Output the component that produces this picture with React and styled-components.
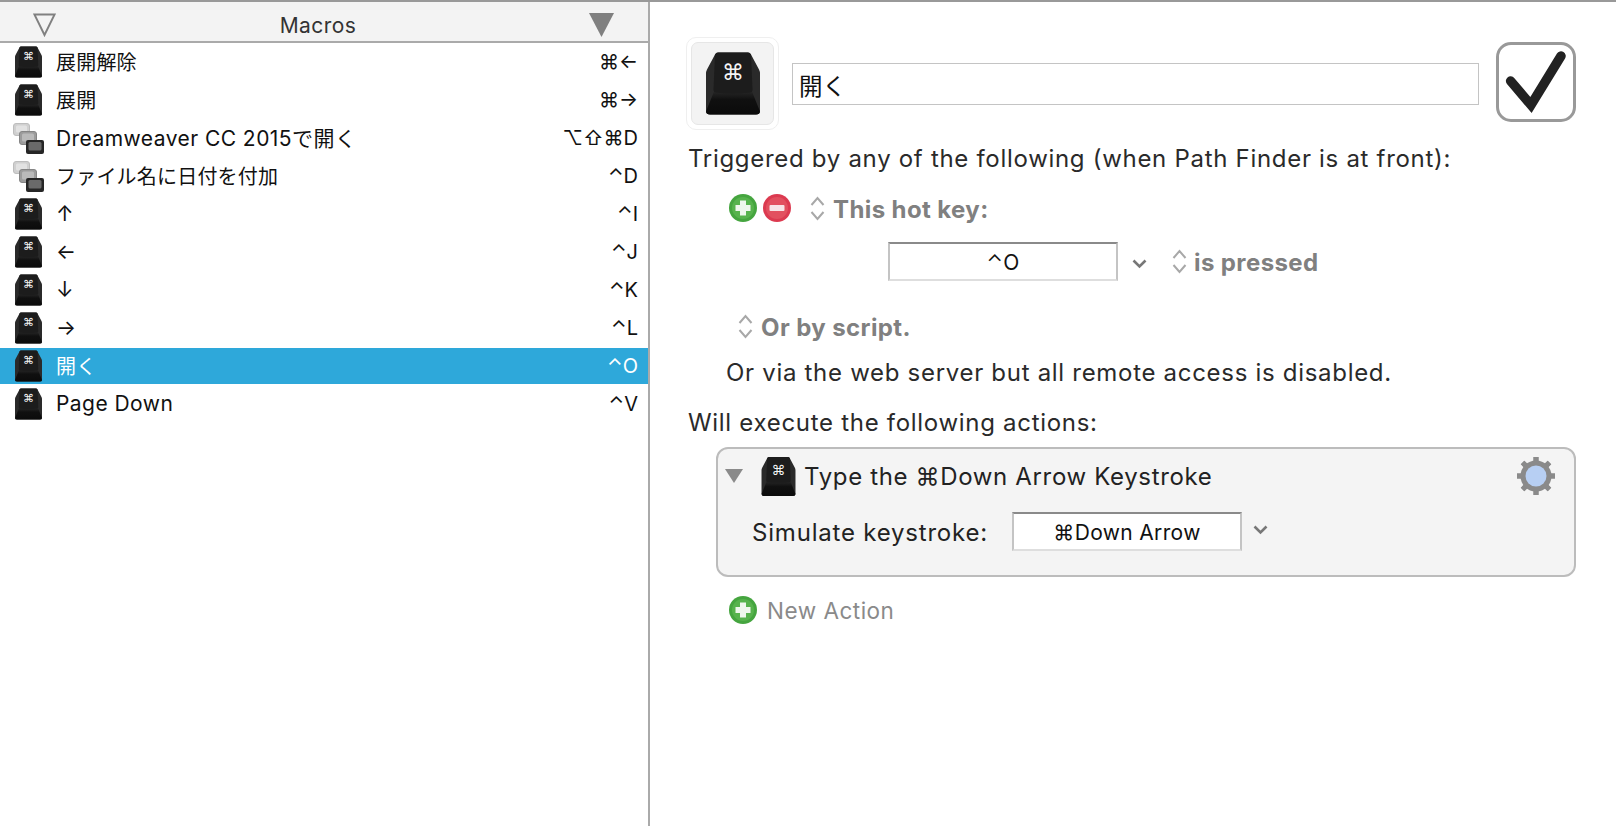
import React from "react";
import styled, { createGlobalStyle } from "styled-components";

const FONT = `Inter, "Noto Sans CJK JP", "DejaVu Sans", sans-serif`;

const Global = createGlobalStyle`
  html, body { margin: 0; padding: 0; background: #fff; height: 100%; overflow: hidden; }
  body { font-family: ${FONT}; color: #222; }
  #root { height: 100%; }
`;

const Window = styled.div`
  width: 1616px;
  height: 826px;
  display: flex;
  flex-direction: column;
  border-top: 2px solid #999;
  box-sizing: border-box;
`;
const Columns = styled.div`
  flex: 1;
  display: flex;
  min-height: 0;
`;
const Sidebar = styled.aside`
  width: 650px;
  box-sizing: border-box;
  flex: none;
  border-right: 2px solid #aaa;
  display: flex;
  flex-direction: column;
`;
const ListHeader = styled.header`
  height: 41px;
  flex: none;
  box-sizing: border-box;
  background: #f3f3f3;
  border-bottom: 2px solid #aaa;
  display: flex;
  align-items: center;
  justify-content: space-between;
  padding: 7px 34px 0 33px;
`;
const HeaderTitle = styled.span`
  font-size: 21px;
  letter-spacing: 0.45px;
  color: #333;
  margin-right: 9px;
`;
const MacroList = styled.ul`
  list-style: none;
  margin: 0;
  padding: 1px 0 0;
  display: flex;
  flex-direction: column;
  gap: 2px;
`;
const MacroRow = styled.li`
  height: 36px;
  display: flex;
  align-items: center;
  padding: 0 10px 0 13px;
  background: ${(p) => (p.$selected ? "#2ea8da" : "transparent")};
  color: ${(p) => (p.$selected ? "#fff" : "#111")};
`;
const IconSlot = styled.span`
  width: 31px;
  height: 32px;
  flex: none;
  display: flex;
  align-items: center;
  justify-content: center;
  margin-right: 12px;
`;
const MacroName = styled.span`
  flex: 1;
  font-size: ${(p) => (p.$cjk ? 20 : 21)}px;
  letter-spacing: ${(p) => (p.$cjk ? 0.2 : 0.45)}px;
  padding-bottom: 2px;
  white-space: nowrap;
`;
const Shortcut = styled.span`
  font-size: 20px;
  padding-bottom: 1px;
  white-space: nowrap;
`;

const Detail = styled.main`
  flex: 1;
  display: flex;
  flex-direction: column;
`;
const TitleRow = styled.div`
  margin-top: 35px;
  padding-left: 36px;
  height: 93px;
  display: flex;
  align-items: center;
`;
const IconWell = styled.div`
  width: 93px;
  height: 93px;
  box-sizing: border-box;
  flex: none;
  border: 1px solid #efefef;
  border-radius: 10px;
  padding: 4px;
  display: flex;
`;
const IconWellInner = styled.div`
  flex: 1;
  background: #f3f3f3;
  border: 1px solid #e6e6e6;
  border-radius: 7px;
  display: flex;
  align-items: center;
  justify-content: center;
`;
const NameInput = styled.div`
  width: 687px;
  height: 42px;
  box-sizing: border-box;
  margin-left: 13px;
  border: 1px solid #c4c4c4;
  padding: 3px 6px 0;
  display: flex;
  align-items: center;
  font-size: 23.5px;
  color: #111;
`;
const CheckBox = styled.div`
  width: 80px;
  height: 80px;
  box-sizing: border-box;
  flex: none;
  margin: -4px 0 0 17px;
  border: 3px solid #999;
  border-radius: 15px;
  display: flex;
  align-items: center;
  justify-content: center;
`;
const Line = styled.div`
  height: 30px;
  line-height: 30px;
  margin-top: ${(p) => p.$top}px;
  padding-left: ${(p) => p.$left}px;
  font-size: 24px;
  letter-spacing: 0.7px;
  white-space: nowrap;
  color: #2a2a2a;
`;
const ControlRow = styled.div`
  display: flex;
  align-items: center;
  height: ${(p) => p.$h}px;
  margin-top: ${(p) => p.$top}px;
  padding-left: ${(p) => p.$left}px;
`;
const Round = styled.span`
  width: 28px;
  height: 28px;
  flex: none;
  margin-right: ${(p) => p.$gap || 0}px;
  display: flex;
`;
const Stepper = styled.span`
  flex: none;
  display: flex;
  margin-right: ${(p) => p.$gap}px;
  margin-left: ${(p) => p.$left || 0}px;
`;
const BoldLabel = styled.span`
  font-size: 24px;
  font-weight: 700;
  letter-spacing: 0.4px;
  margin-top: 2px;
  color: #808080;
  white-space: nowrap;
`;
const KeyField = styled.div`
  width: 230px;
  height: 39px;
  box-sizing: border-box;
  flex: none;
  background: #fff;
  border: 2px solid #c4c4c4;
  border-top-color: #8a8a8a;
  border-bottom-color: #dedede;
  padding-top: 1px;
  display: flex;
  align-items: center;
  justify-content: center;
  font-size: 21px;
  letter-spacing: 0.35px;
  color: #111;
`;
const DropChevron = styled.span`
  flex: none;
  display: flex;
  margin: ${(p) => p.$margin};
`;
const ActionBox = styled.section`
  width: 860px;
  height: 130px;
  box-sizing: border-box;
  margin: 9px 0 0 66px;
  background: #f4f4f4;
  border: 2px solid #bcbcbc;
  border-radius: 12px;
  padding: 7px 19px 0 7px;
`;
const ActionHead = styled.div`
  display: flex;
  align-items: center;
  height: 40px;
`;
const Disclosure = styled.span`
  flex: none;
  display: flex;
  margin-right: 18px;
`;
const ActionTitle = styled.span`
  flex: 1;
  font-size: 24px;
  letter-spacing: 0.65px;
  margin-left: 8px;
  white-space: nowrap;
  color: #222;
`;
const ActionBody = styled.div`
  display: flex;
  align-items: center;
  height: 39px;
  margin-top: 16px;
  padding-left: 27px;
`;
const SimLabel = styled.span`
  width: 260px;
  flex: none;
  font-size: 24px;
  letter-spacing: 0.8px;
  margin-top: 2px;
  white-space: nowrap;
  color: #222;
`;
const GrayLabel = styled.span`
  font-size: 22.5px;
  letter-spacing: 0.5px;
  color: #8a8a8a;
  white-space: nowrap;
`;

let uid = 0;
function KeyCap({ w, h }) {
  const id = React.useMemo(() => `k${uid++}`, []);
  return (
    <svg width={w} height={h} viewBox="0 0 54 62" style={{ flex: "none" }}>
      <defs>
        <linearGradient id={id} x1="0" y1="0" x2="0" y2="1">
          <stop offset="0" stopColor="#262626" />
          <stop offset="0.35" stopColor="#101010" />
          <stop offset="1" stopColor="#0b0b0b" />
        </linearGradient>
      </defs>
      <path d="M9 2 Q10 0 12 0 H42 Q44 0 45 2 L53 17 Q54 19 54 21 V58 Q54 62 50 62 H4 Q0 62 0 58 V21 Q0 19 1 17 Z" fill="#2a2a2a" />
      <path d="M0 59 L8 39 H46 L54 59 Q54 62 50 62 H4 Q0 62 0 59 Z" fill={`url(#${id})`} />
      <path d="M7.5 37 L9 2 Q10 0 12 0 H42 Q44 0 45 2 L46.5 37 Q46.5 40 44 40 Q27 42 10 40 Q7.5 40 7.5 37 Z" fill="#1c1c1c" />
      <text x="27" y="20" fontSize="22" fill="#f5f5f5" textAnchor="middle" dominantBaseline="central" fontFamily='"DejaVu Sans", sans-serif'>⌘</text>
    </svg>
  );
}

function StackIcon() {
  return (
    <svg width="31" height="31" viewBox="0 0 31 31" style={{ flex: "none" }}>
      <rect x="0.5" y="0.5" width="16" height="12" rx="2.5" fill="#d0d0d0" stroke="#bdbdbd" />
      <rect x="3" y="2.5" width="11" height="7" rx="1.5" fill="#e2e2e2" />
      <rect x="6.5" y="8.5" width="17" height="13" rx="2.5" fill="#9c9c9c" stroke="#858585" />
      <rect x="9" y="10.5" width="12" height="8" rx="1.5" fill="#bababa" />
      <rect x="13" y="17" width="18" height="14" rx="2" fill="#262626" />
      <rect x="15.5" y="19" width="13" height="8.5" rx="1.5" fill="#6a6a6a" />
    </svg>
  );
}

function Tri({ hollow, w, h, color = "#808080" }) {
  return (
    <svg width={w} height={h} viewBox="0 0 24 24" preserveAspectRatio="none" style={{ flex: "none" }}>
      {hollow ? (
        <path d="M1.5 1.5 H22.5 L12 22 Z" fill="none" stroke={color} strokeWidth="2" />
      ) : (
        <path d="M0 0 H24 L12 24 Z" fill={color} />
      )}
    </svg>
  );
}

function PlusCircle() {
  return (
    <svg width="28" height="28" viewBox="0 0 28 28">
      <circle cx="14" cy="14" r="14" fill="#45a53f" />
      <circle cx="14" cy="14" r="11" fill="#57b34d" />
      <path d="M11 6.5 H17 V11 H21.5 V17 H17 V21.5 H11 V17 H6.5 V11 H11 Z" fill="#eef7ec" />
    </svg>
  );
}
function MinusCircle() {
  return (
    <svg width="28" height="28" viewBox="0 0 28 28">
      <circle cx="14" cy="14" r="14" fill="#dc3a50" />
      <circle cx="14" cy="14" r="11" fill="#e2505f" />
      <rect x="6.5" y="11" width="15" height="6" rx="1" fill="#f7e4e6" />
    </svg>
  );
}
function Updown() {
  return (
    <svg width="15" height="25" viewBox="0 0 15 25">
      <path d="M1.5 9 L7.5 2 L13.5 9 M1.5 16 L7.5 23 L13.5 16" fill="none" stroke="#a8a8a8" strokeWidth="2" />
    </svg>
  );
}
function Chevron() {
  return (
    <svg width="15" height="10" viewBox="0 0 15 10">
      <path d="M1.5 1.5 L7.5 7.5 L13.5 1.5" fill="none" stroke="#777" strokeWidth="2.6" />
    </svg>
  );
}
function Gear() {
  const teeth = [0, 45, 90, 135, 180, 225, 270, 315];
  return (
    <svg width="38" height="38" viewBox="0 0 38 38" style={{ flex: "none" }}>
      {teeth.map((a) => (
        <rect key={a} x="16.5" y="0" width="5" height="38" fill="#8a8a8a" transform={`rotate(${a} 19 19)`} />
      ))}
      <circle cx="19" cy="19" r="15.5" fill="#8a8a8a" />
      <circle cx="19" cy="19" r="10.5" fill="#b7cff3" />
    </svg>
  );
}

const macros = [
  { icon: "key", name: "展開解除", keys: "⌘←", cjk: true },
  { icon: "key", name: "展開", keys: "⌘→", cjk: true },
  { icon: "stack", name: "Dreamweaver CC 2015で開く", keys: "⌥⇧⌘D" },
  { icon: "stack", name: "ファイル名に日付を付加", keys: "⌃D", cjk: true },
  { icon: "key", name: "↑", keys: "⌃I" },
  { icon: "key", name: "←", keys: "⌃J" },
  { icon: "key", name: "↓", keys: "⌃K" },
  { icon: "key", name: "→", keys: "⌃L" },
  { icon: "key", name: "開く", keys: "⌃O", cjk: true, selected: true },
  { icon: "key", name: "Page Down", keys: "⌃V" },
];

export default function App() {
  return (
    <>
      <Global />
      <Window>
        <Columns>
          <Sidebar>
            <ListHeader>
              <Tri hollow w={23} h={24} />
              <HeaderTitle>Macros</HeaderTitle>
              <Tri w={25} h={24} />
            </ListHeader>
            <MacroList>
              {macros.map((m) => (
                <MacroRow key={m.name} $selected={m.selected}>
                  <IconSlot>
                    {m.icon === "key" ? <KeyCap w={27} h={32} /> : <StackIcon />}
                  </IconSlot>
                  <MacroName $cjk={m.cjk}>{m.name}</MacroName>
                  <Shortcut>{m.keys}</Shortcut>
                </MacroRow>
              ))}
            </MacroList>
          </Sidebar>
          <Detail>
            <TitleRow>
              <IconWell>
                <IconWellInner>
                  <KeyCap w={54} h={63} />
                </IconWellInner>
              </IconWell>
              <NameInput>開く</NameInput>
              <CheckBox>
                <svg width="62" height="62" viewBox="0 0 62 62" style={{ overflow: "visible" }}>
                  <path d="M5.6 30 L26 54 L56 5" fill="none" stroke="#222" strokeWidth="9.5" strokeLinecap="round" strokeLinejoin="miter" />
                </svg>
              </CheckBox>
            </TitleRow>
            <Line $top={14} $left={38}>Triggered by any of the following (when Path Finder is at front):</Line>
            <ControlRow $h={28} $top={20} $left={79}>
              <Round $gap={6}><PlusCircle /></Round>
              <Round><MinusCircle /></Round>
              <Stepper $left={19} $gap={8}><Updown /></Stepper>
              <BoldLabel>This hot key:</BoldLabel>
            </ControlRow>
            <ControlRow $h={39} $top={20} $left={238}>
              <KeyField>⌃O</KeyField>
              <DropChevron $margin="4px 25px 0 14px"><Chevron /></DropChevron>
              <Stepper $gap={7}><Updown /></Stepper>
              <BoldLabel>is pressed</BoldLabel>
            </ControlRow>
            <ControlRow $h={28} $top={31} $left={88}>
              <Stepper $gap={8}><Updown /></Stepper>
              <BoldLabel>Or by script.</BoldLabel>
            </ControlRow>
            <Line $top={18} $left={76}>Or via the web server but all remote access is disabled.</Line>
            <Line $top={20} $left={38}>Will execute the following actions:</Line>
            <ActionBox>
              <ActionHead>
                <Disclosure><Tri w={18} h={14} color="#8a8a8a" /></Disclosure>
                <KeyCap w={35} h={39} />
                <ActionTitle>Type the ⌘Down Arrow Keystroke</ActionTitle>
                <Gear />
              </ActionHead>
              <ActionBody>
                <SimLabel>Simulate keystroke:</SimLabel>
                <KeyField>⌘Down Arrow</KeyField>
                <DropChevron $margin="-4px 0 0 11px"><Chevron /></DropChevron>
              </ActionBody>
            </ActionBox>
            <ControlRow $h={28} $top={19} $left={79}>
              <Round $gap={10}><PlusCircle /></Round>
              <GrayLabel>New Action</GrayLabel>
            </ControlRow>
          </Detail>
        </Columns>
      </Window>
    </>
  );
}
